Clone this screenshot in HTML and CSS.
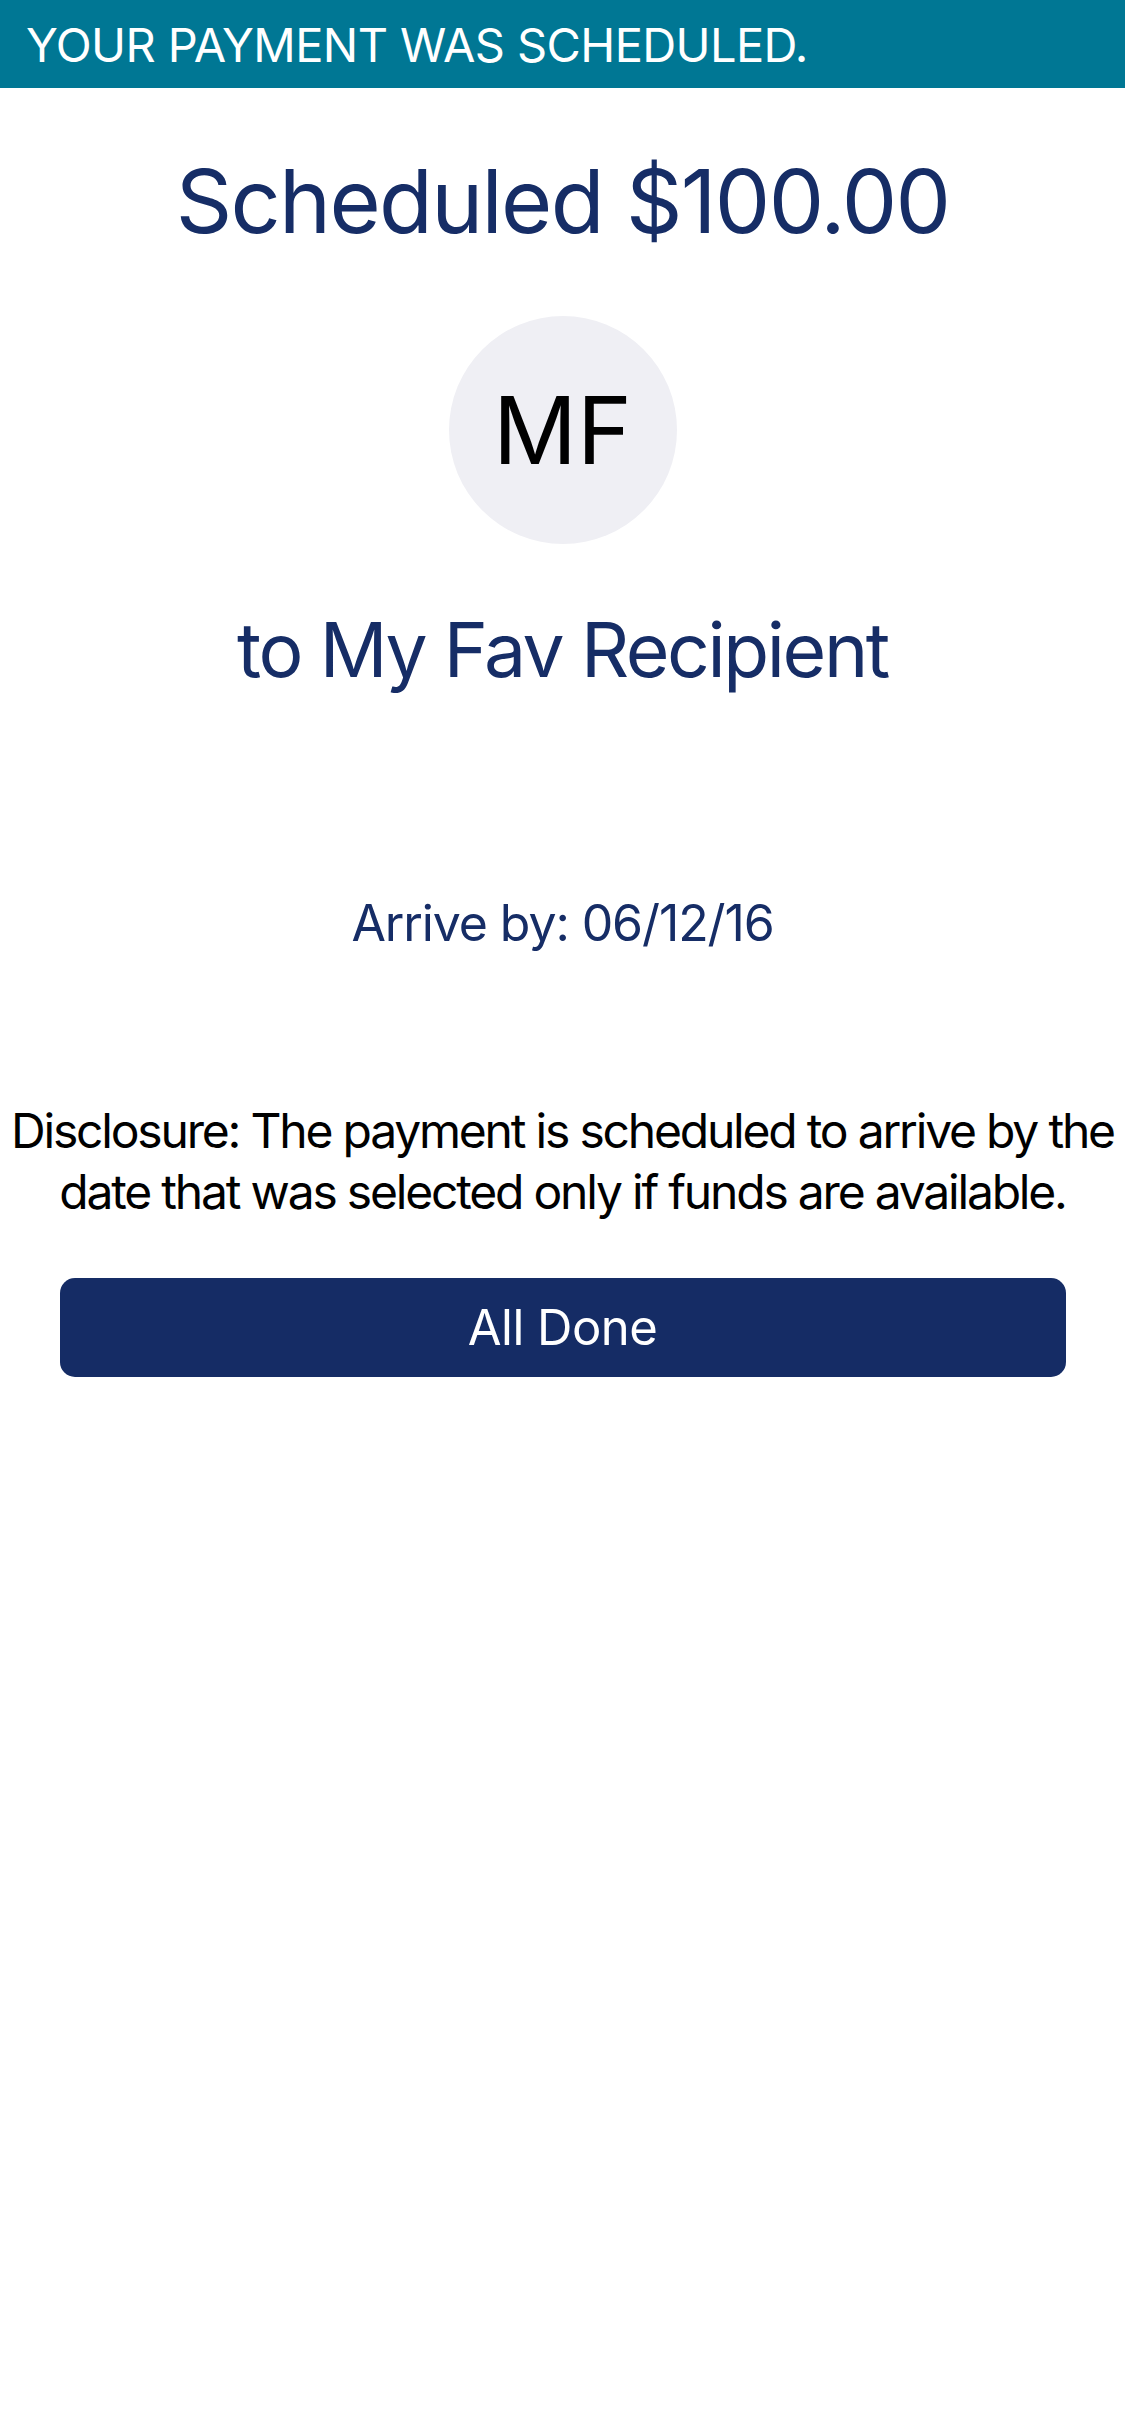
FILE: index.html
```html
<!DOCTYPE html>
<html>
<head>
<meta charset="utf-8">
<link rel="stylesheet" href="styles.css">
</head>
<body>
<div class="banner">YOUR PAYMENT WAS SCHEDULED.</div>
<main class="content">
  <h1 class="title">Scheduled $100.00</h1>
  <div class="avatar">MF</div>
  <div class="recipient">to My Fav Recipient</div>
  <div class="arrive">Arrive by: 06/12/16</div>
  <p class="disclosure">Disclosure: The payment is scheduled to arrive by the date that was selected only if funds are available.</p>
  <button class="done">All Done</button>
</main>
</body>
</html>
```

FILE: styles.css
```css
html, body {
  margin: 0;
  padding: 0;
  background: #ffffff;
}
body {
  width: 1125px;
  min-height: 2436px;
  font-family: Inter, "Noto Sans", sans-serif;
}
.banner {
  height: 88px;
  background: #007794;
  color: #ffffff;
  display: flex;
  align-items: center;
  padding-left: 26px;
  font-size: 47px;
  letter-spacing: -0.6px;
}
.content {
  display: flex;
  flex-direction: column;
  align-items: center;
}
.title {
  margin: 68px 0 0;
  font-size: 88px;
  line-height: 90px;
  font-weight: 400;
  color: #162d66;
  letter-spacing: -1.7px;
}
.avatar {
  margin-top: 70px;
  width: 228px;
  height: 228px;
  border-radius: 50%;
  background: #efeff4;
  color: #000000;
  display: flex;
  align-items: center;
  justify-content: center;
  font-size: 93px;
}
.recipient {
  margin-top: 67px;
  font-size: 75px;
  line-height: 78px;
  color: #162d66;
  letter-spacing: -2.4px;
}
.arrive {
  margin-top: 209px;
  font-size: 50px;
  line-height: 51px;
  color: #162d66;
  letter-spacing: -1.1px;
}
.disclosure {
  margin: 151px 0 0;
  padding: 0;
  font-size: 48px;
  line-height: 61px;
  color: #000000;
  text-align: center;
  letter-spacing: -2.2px;
}
.done {
  margin-top: 56px;
  width: 1006px;
  height: 99px;
  border: none;
  border-radius: 15px;
  background: #152c65;
  color: #ffffff;
  font-family: Inter, "Noto Sans", sans-serif;
  font-size: 49px;
  letter-spacing: -0.5px;
  padding: 0;
}
```
